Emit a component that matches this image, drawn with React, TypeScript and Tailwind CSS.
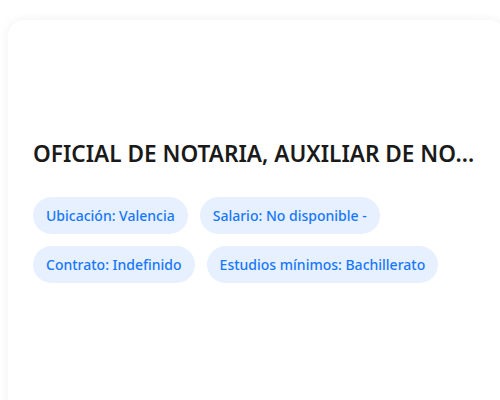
export default function App() {
  const tags = [
    'Ubicación: Valencia',
    'Salario: No disponible -',
    'Contrato: Indefinido',
    'Estudios mínimos: Bachillerato',
  ];

  return (
    <div className="w-[500px] h-[400px] overflow-hidden bg-white font-['Noto_Sans',sans-serif]">
      <div className="ml-2 mt-5 w-[497px] h-[420px] rounded-2xl bg-white px-[25px] pt-[117px] shadow-[0_0_12px_rgba(0,0,0,0.06)]">
        <h2 className="truncate text-[22.6px] leading-[33px] font-semibold text-[#1a1a1a]">
          OFICIAL DE NOTARIA, AUXILIAR DE NOTARIA Y GESTOR
        </h2>
        <div className="mt-[27px] flex flex-wrap gap-3">
          {tags.map((t) => (
            <span
              key={t}
              className="flex h-[37px] items-center rounded-full bg-[#e6f0ff] px-[13px] text-sm font-medium text-[#1677ff]"
            >
              {t}
            </span>
          ))}
        </div>
      </div>
    </div>
  );
}
